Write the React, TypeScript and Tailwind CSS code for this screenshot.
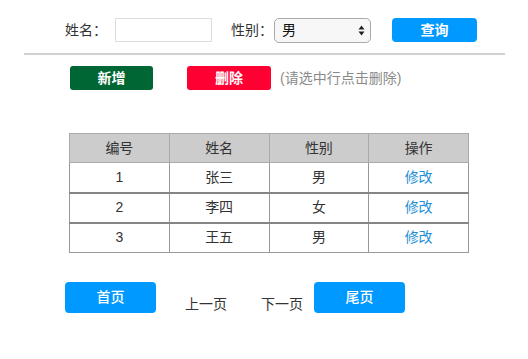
import React from "react";

const rows = [
  { id: 1, name: "张三", sex: "男" },
  { id: 2, name: "李四", sex: "女" },
  { id: 3, name: "王五", sex: "男" },
];

export default function App() {
  return (
    <div className="min-h-[359px] w-[528px] bg-white pt-[18px] text-[14px] text-[#333] [font-family:'Liberation_Sans','Noto_Sans_CJK_SC',sans-serif]">
      {/* 查询条件 */}
      <div className="flex h-6 items-center pl-[65px]">
        <span className="w-[50px]">姓名：</span>
        <input className="h-6 w-[97px] border border-[#ddd] px-1 outline-none" />
        <span className="ml-[19px] w-[43px]">性别：</span>
        <div className="flex h-[25px] w-[97px] items-center justify-between rounded-[5px] border border-[#aaa] bg-[#f7f7f7] pl-[7px] pr-[5px]">
          <span className="text-[#111]">男</span>
          <svg width="7" height="11" viewBox="0 0 7 11">
            <path d="M3.5 0.5 L6.5 4.5 L0.5 4.5 Z" fill="#222" />
            <path d="M3.5 10.5 L6.5 6.5 L0.5 6.5 Z" fill="#222" />
          </svg>
        </div>
        <button className="ml-[21px] h-6 w-[85px] rounded-[4px] bg-[#0099ff] font-semibold text-white">查询</button>
      </div>

      <div className="ml-[24px] mt-[11px] h-[2px] w-[481px] bg-[#d0d0d0]" />

      {/* 操作按钮 */}
      <div className="mt-[11px] flex h-6 items-center pl-[70px]">
        <button className="h-6 w-[83px] rounded-[3px] bg-[#006633] font-semibold text-white">新增</button>
        <button className="ml-[34px] h-6 w-[84px] rounded-[3px] bg-[#ff0033] font-semibold text-white">删除</button>
        <span className="ml-[9px] text-[#8a8a8a]">(请选中行点击删除)</span>
      </div>

      {/* 表格 */}
      <table className="ml-[69px] mt-[43px] w-[400px] table-fixed border-collapse text-center">
        <thead>
          <tr>
            <th className="h-[29px] border border-[#aaa] bg-[#cccccc] font-normal">编号</th>
            <th className="h-[29px] border border-[#aaa] bg-[#cccccc] font-normal">姓名</th>
            <th className="h-[29px] border border-[#aaa] bg-[#cccccc] font-normal">性别</th>
            <th className="h-[29px] border border-[#aaa] bg-[#cccccc] font-normal">操作</th>
          </tr>
        </thead>
        <tbody>
          {rows.map((r, i) => {
            const top = i === 0 ? "" : "border-t-2 border-t-[#858585]";
            return (
              <tr key={r.id}>
                <td className={`h-[30px] border border-[#999] ${top}`}>{r.id}</td>
                <td className={`h-[30px] border border-[#999] ${top}`}>{r.name}</td>
                <td className={`h-[30px] border border-[#999] ${top}`}>{r.sex}</td>
                <td className={`h-[30px] border border-[#999] ${top} text-[#1d8fd6]`}>修改</td>
              </tr>
            );
          })}
        </tbody>
      </table>

      {/* 分页 */}
      <div className="mt-[29px] flex items-start pl-[65px]">
        <button className="h-[31px] w-[91px] rounded-[4px] bg-[#0099ff] font-medium text-white">首页</button>
        <span className="ml-[29px] mt-[12px]">上一页</span>
        <span className="ml-[34px] mt-[12px]">下一页</span>
        <button className="ml-[11px] h-[31px] w-[91px] rounded-[4px] bg-[#0099ff] font-medium text-white">尾页</button>
      </div>
    </div>
  );
}
